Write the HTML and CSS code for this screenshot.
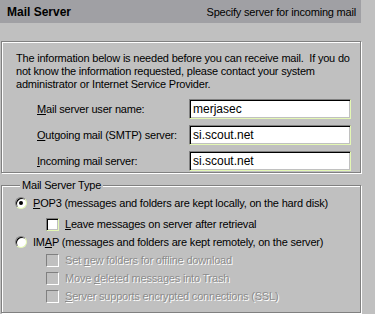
FILE: index.html
```html
<!DOCTYPE html>
<html lang="en">
<head>
    <meta charset="UTF-8">
    <title>Mail Server</title>
    <link rel="stylesheet" href="styles.css">
</head>
<body>
    <div class="header">
        <span class="header-title">Mail Server</span>
        <span class="header-sub">Specify server for incoming mail</span>
    </div>

    <!-- account info -->
    <div class="group info-group">
        <p class="intro">The information below is needed before you can receive mail.&nbsp; If you do<br>not know the information requested, please contact your system<br>administrator or Internet Service Provider.</p>
        <div class="field">
            <label><u>M</u>ail server user name:</label>
            <div class="textbox">merjasec</div>
        </div>
        <div class="field">
            <label><u>O</u>utgoing mail (SMTP) server:</label>
            <div class="textbox">si.scout.net</div>
        </div>
        <div class="field">
            <label><u>I</u>ncoming mail server:</label>
            <div class="textbox">si.scout.net</div>
        </div>
    </div>

    <!-- server type -->
    <fieldset class="group type-group">
        <legend>Mail Server Type</legend>
        <div class="option row-pop">
            <span class="radio checked"></span>
            <span><u>P</u>OP3 (messages and folders are kept locally, on the hard disk)</span>
        </div>
        <div class="option sub row-leave">
            <span class="check"></span>
            <span><u>L</u>eave messages on server after retrieval</span>
        </div>
        <div class="option">
            <span class="radio"></span>
            <span>IM<u>A</u>P (messages and folders are kept remotely, on the server)</span>
        </div>
        <div class="option sub disabled">
            <span class="check"></span>
            <span>Set <u>n</u>ew folders for offline download</span>
        </div>
        <div class="option sub disabled">
            <span class="check"></span>
            <span>Move <u>d</u>eleted messages into Trash</span>
        </div>
        <div class="option sub disabled">
            <span class="check"></span>
            <span><u>S</u>erver supports encrypted connections (SSL)</span>
        </div>
    </fieldset>
</body>
</html>
```

FILE: styles.css
```css
body {
    margin: 0;
    background-color: #c0c0c0;
    font-family: "Liberation Sans", Arial, sans-serif;
    font-size: 11px;
    letter-spacing: -0.2px;
    color: #000;
    width: 375px;
    height: 314px;
    overflow: hidden;
}

u {
    text-decoration: underline;
    text-underline-offset: 1px;
}

.header {
    width: 361px;
    height: 23px;
    box-sizing: border-box;
    background-color: #a0a0a4;
    display: flex;
    justify-content: space-between;
    align-items: center;
    padding: 0 5px 0 7px;
}

.header-title {
    font-weight: bold;
    font-size: 12px;
    letter-spacing: 0;
}

/* etched group box */
.group {
    box-sizing: border-box;
    width: 360px;
    margin-left: 1px;
    border: 1px solid #808080;
    box-shadow: inset 1px 1px #fff, 1px 1px #fff;
}

.info-group {
    margin-top: 18px;
    height: 132px;
    padding: 10px 0 0 14px;
}

.intro {
    margin: 0 0 8px 0;
    line-height: 13px;
    white-space: nowrap;
}

.field {
    display: flex;
    align-items: center;
    margin-bottom: 6px;
    padding-left: 21px;
}

.field label {
    width: 152px;
}

.textbox {
    box-sizing: border-box;
    width: 162px;
    height: 20px;
    background-color: #fff;
    border: 1px solid;
    border-color: #808080 #e4f8b4 #e4f8b4 #808080;
    box-shadow: inset 1px 1px #000, inset -1px -1px #c0c0c0;
    padding: 2px 0 0 3px;
    line-height: 15px;
    font-size: 12px;
    letter-spacing: 0;
}

.type-group {
    margin-top: 6px;
    margin-bottom: 0;
    margin-right: 0;
    height: 134px;
    padding: 0 0 0 13px;
}

.type-group legend {
    margin-left: 5px;
    padding: 0 2px;
    background-color: #c0c0c0;
    line-height: 13px;
}

.option {
    display: flex;
    align-items: center;
    gap: 6px;
    height: 18px;
    white-space: nowrap;
}

.row-pop {
    margin-top: 2px;
}

.row-leave {
    margin-top: 3px;
}

.option.sub {
    padding-left: 31px;
}

.radio {
    position: relative;
    box-sizing: border-box;
    width: 12px;
    height: 12px;
    border-radius: 50%;
    background-color: #fff;
    border: 1px solid;
    border-color: #808080 #e4f8b4 #e4f8b4 #808080;
    box-shadow: inset 1px 1px #000;
}

.radio.checked::after {
    content: "";
    position: absolute;
    left: 3px;
    top: 3px;
    width: 4px;
    height: 4px;
    border-radius: 50%;
    background-color: #000;
}

.check {
    box-sizing: border-box;
    width: 13px;
    height: 13px;
    background-color: #fff;
    border: 1px solid;
    border-color: #808080 #e4f8b4 #e4f8b4 #808080;
    box-shadow: inset 1px 1px #000, inset -1px -1px #c0c0c0;
}

.disabled {
    color: #8c8c8c;
    text-shadow: 1px 1px #fff;
}

.disabled .check {
    background-color: #c0c0c0;
    border-color: #808080 #fff #fff #808080;
    box-shadow: none;
}
```
